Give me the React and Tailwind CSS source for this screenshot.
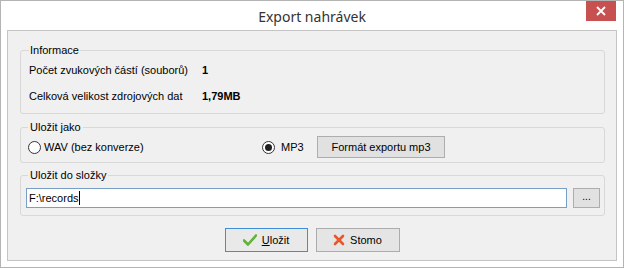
import React from "react";

const Radio = ({ checked }) => (
  <span className="w-[13px] h-[13px] rounded-full border border-[#333333] bg-white flex items-center justify-center shrink-0">
    {checked && <span className="w-[7px] h-[7px] rounded-full bg-[#1f1f1f]" />}
  </span>
);

const CheckIcon = () => (
  <svg width="14" height="12" viewBox="0 0 14 12">
    <path d="M1 6.5 L5 10.5 L13 1.5" fill="none" stroke="#5fb336" strokeWidth="2.6" strokeLinejoin="round" strokeLinecap="round" />
  </svg>
);

const CrossIcon = () => (
  <svg width="12" height="12" viewBox="0 0 12 12">
    <path d="M2 2 L10 10 M10 2 L2 10" fill="none" stroke="#e8562a" strokeWidth="2.6" strokeLinecap="round" />
  </svg>
);

export default function App() {
  return (
    <div className="w-[624px] h-[268px] bg-white border border-[#b4b4b4] flex flex-col font-['Liberation_Sans',Arial,sans-serif] text-[11px] text-black whitespace-nowrap">
      {/* title bar */}
      <div className="h-[29px] relative flex items-center justify-center shrink-0">
        <span className="text-[14px] text-[#333333] font-['Noto_Sans',sans-serif] pt-[2px]">Export nahrávek</span>
        <button className="absolute right-[7px] top-0 w-[30px] h-[20px] bg-[#c75050] flex items-center justify-center">
          <svg width="10" height="10" viewBox="0 0 10 10">
            <path d="M1 1 L9 9 M9 1 L1 9" stroke="white" strokeWidth="1.8" />
          </svg>
        </button>
      </div>

      {/* client area */}
      <div className="flex-1 mx-[6px] mb-[6px] bg-[#f0f0f0] border border-[#c4c4c4] flex flex-col">
        <fieldset className="ml-[12px] mr-[11px] mt-[12px] border border-[#d8d8d8] rounded-[3px] pl-[8px] pb-[10px]">
          <legend className="px-[1px] leading-[14px]">Informace</legend>
          <div className="grid grid-cols-[173px_1fr] gap-y-[12px] mt-[6px] leading-[14px]">
            <span>Počet zvukových částí (souborů)</span>
            <span className="font-bold">1</span>
            <span>Celková velikost zdrojových dat</span>
            <span className="font-bold">1,79MB</span>
          </div>
        </fieldset>

        <fieldset className="ml-[12px] mr-[11px] mt-[6px] border border-[#d8d8d8] rounded-[3px] pl-[7px] pb-[4px]">
          <legend className="px-[2px] leading-[14px]">Uložit jako</legend>
          <div className="flex items-center h-[22px] mt-[2px]">
            <label className="flex items-center gap-[3px] w-[234px]">
              <Radio />
              <span>WAV (bez konverze)</span>
            </label>
            <label className="flex items-center gap-[6px] w-[55px]">
              <Radio checked />
              <span>MP3</span>
            </label>
            <button className="w-[128px] h-[22px] bg-[#e1e1e1] border border-[#adadad]">
              Formát exportu mp3
            </button>
          </div>
        </fieldset>

        <fieldset className="ml-[12px] mr-[11px] mt-[5px] border border-[#d8d8d8] rounded-[3px] pl-[5px] pb-[7px]">
          <legend className="ml-[2px] px-[2px] leading-[14px]">Uložit do složky</legend>
          <div className="flex items-center gap-[6px] mt-[6px]">
            <div className="w-[541px] h-[20px] bg-white border border-[#7a9fc7] flex items-center px-[2px]">
              <span>F:\records</span>
              <span className="w-px h-[14px] bg-black" />
            </div>
            <button className="w-[27px] h-[20px] bg-[#e1e1e1] border border-[#adadad] text-[10px] leading-none pb-[2px]">
              ...
            </button>
          </div>
        </fieldset>

        <div className="flex justify-center gap-[8px] mt-[12px]">
          <button className="w-[83px] h-[24px] bg-[#e9e9e9] border border-[#3c8fd8] flex items-center justify-center gap-[5px]">
            <CheckIcon />
            <span>
              <span className="underline">U</span>ložit
            </span>
          </button>
          <button className="w-[84px] h-[24px] bg-[#e5e5e5] border border-[#acacac] flex items-center justify-center gap-[5px]">
            <CrossIcon />
            <span>Stomo</span>
          </button>
        </div>
      </div>
    </div>
  );
}
